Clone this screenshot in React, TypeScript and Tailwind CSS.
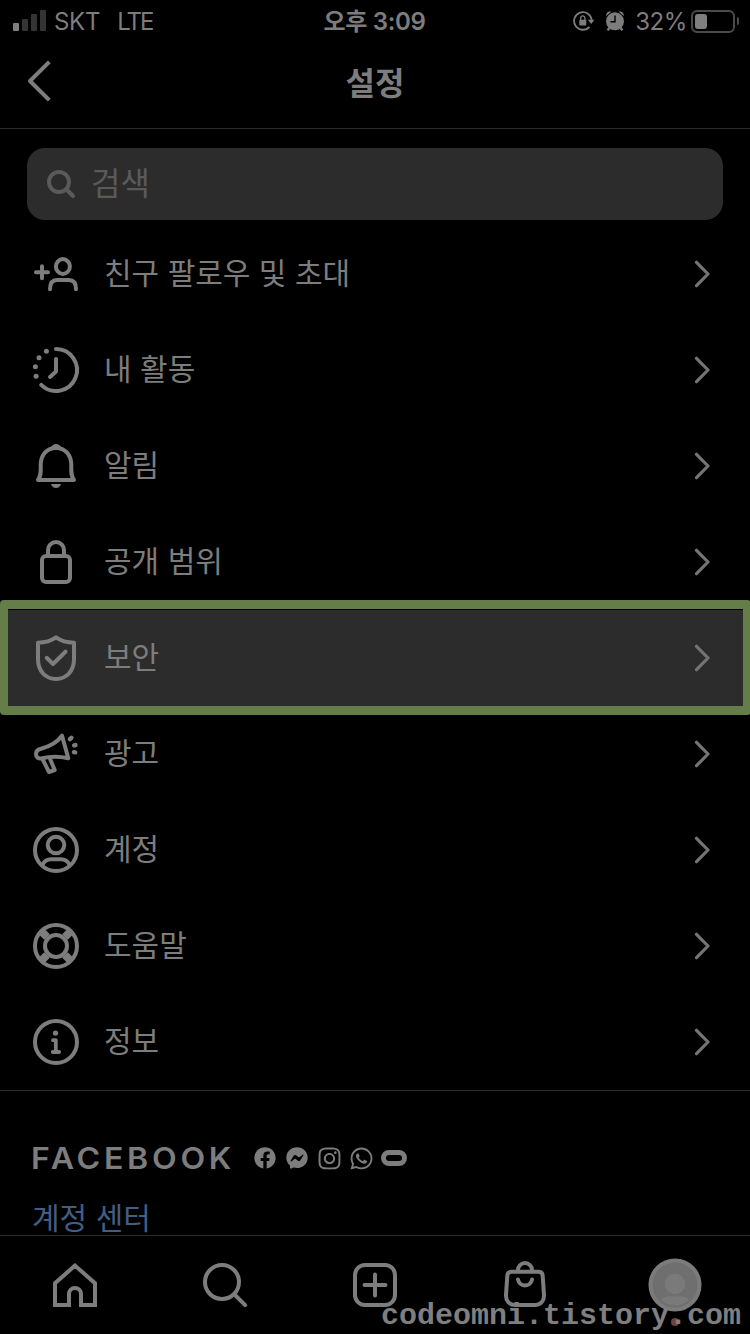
import type { ReactNode } from "react";
import { FaFacebook, FaWhatsapp, FaInstagram } from "react-icons/fa";
import { FaFacebookMessenger } from "react-icons/fa6";

function Icon({ children }: { readonly children: ReactNode }) {
  return (
    <svg
      viewBox="0 0 48 48"
      fill="none"
      stroke="currentColor"
      strokeWidth={4}
      strokeLinecap="round"
      strokeLinejoin="round"
      className="size-12 shrink-0 overflow-visible"
    >
      {children}
    </svg>
  );
}

function InviteIcon() {
  return (
    <Icon>
      <path d="M4 22.2h12M10 16.2v12" />
      <ellipse cx="30.9" cy="16.5" rx="7" ry="7.4" />
      <path d="M18 39.2C18 33 20.5 30 25 30h12c4.500 0 7 3 7 9.200" />
    </Icon>
  );
}

function ActivityIcon() {
  return (
    <Icon>
      <path d="M24 3a21 21 0 1 1-14.800 35.900" />
      <path d="M24 13v12.500l-6 5.500" />
      <g fill="currentColor" stroke="none">
        <circle cx="14.400" cy="5.300" r="2.500" />
        <circle cx="7" cy="11.700" r="2.500" />
        <circle cx="3.400" cy="20.700" r="2.500" />
        <circle cx="4.100" cy="30.300" r="2.500" />
      </g>
    </Icon>
  );
}

function BellIcon() {
  return (
    <Icon>
      <path d="M6 38c3.300-4.500 2.700-8 2.700-15C8.700 12.500 15 6 24 6s15.300 6.500 15.300 17c0 7-.6 10.500 2.700 15Z" />
      <path d="M18 6.500c1.500-3 3.500-4.500 6-4.500s4.500 1.500 6 4.500Z" fill="currentColor" stroke="none" />
      <path d="M19 42h10c-.7 2.500-2.500 4-5 4s-4.300-1.500-5-4Z" fill="currentColor" stroke="none" />
    </Icon>
  );
}

function LockIcon() {
  return (
    <Icon>
      <rect x="10" y="18" width="28" height="26" rx="4" />
      <path d="M16 18v-6a8 8 0 0 1 16 0v6" />
    </Icon>
  );
}

function ShieldIcon() {
  return (
    <Icon>
      <path d="M24 3.300c-5 3.500-11 5.200-18 5.400V25c0 12 7.500 20 18 20s18-8 18-20V8.700c-7-.2-13-1.900-18-5.400Z" />
      <path d="m14.700 23.800 6.300 6.200 12.500-12.300" />
    </Icon>
  );
}

function MegaphoneIcon() {
  return (
    <Icon>
      <path d="M30 5.700 36.300 28.300C26 26 18 26.500 10 28.300c-4 .8-6-1.300-6-4.300 0-3.200 1.500-4.500 5-5.300C17.500 16.500 24.500 13 30 5.700Z" />
      <path d="m10.500 29 6.500 13 5.700-2-5-12" />
      <path d="m37.900 9.200 1.500-1.400M42.100 15.400l1.400-.3M41.900 22.200l1.300.2" strokeWidth="4.400" />
    </Icon>
  );
}

function AccountIcon() {
  return (
    <Icon>
      <circle cx="24" cy="24" r="21" />
      <circle cx="24" cy="19" r="8.300" />
      <path d="M10.500 38.500c2-3.500 4.500-5.200 8.500-5.200h10c4 0 6.500 1.700 8.500 5.200" />
    </Icon>
  );
}

function HelpIcon() {
  return (
    <Icon>
      <circle cx="24" cy="24" r="21" />
      <circle cx="24" cy="24" r="11" />
      <path
        d="m15 15-5-5M33 15l5-5M15 33l-5 5M33 33l5 5"
        strokeWidth="8"
        strokeLinecap="butt"
      />
    </Icon>
  );
}

function InfoIcon() {
  return (
    <Icon>
      <circle cx="24" cy="24" r="21" />
      <circle cx="23.500" cy="15.100" r="2.700" fill="currentColor" stroke="none" />
      <path d="M21 22.200h2.800V34M20.800 34h6.400" strokeWidth="3.800" />
    </Icon>
  );
}

const menuItems = [
  { label: "친구 팔로우 및 초대", icon: <InviteIcon /> },
  { label: "내 활동", icon: <ActivityIcon /> },
  { label: "알림", icon: <BellIcon /> },
  { label: "공개 범위", icon: <LockIcon /> },
  { label: "보안", icon: <ShieldIcon />, highlighted: true },
  { label: "광고", icon: <MegaphoneIcon /> },
  { label: "계정", icon: <AccountIcon /> },
  { label: "도움말", icon: <HelpIcon /> },
  { label: "정보", icon: <InfoIcon /> },
];

function StatusBar() {
  return (
    <div className="grid h-10 shrink-0 grid-cols-3 items-center text-2xl leading-10">
      <div className="flex items-center pl-[13px]">
        <div className="mb-0.5 flex items-end gap-[3px]">
          <span className="h-2 w-1.5 rounded-[1px] bg-[#7f7f7f]" />
          <span className="h-3 w-1.5 rounded-[1px] bg-[#343434]" />
          <span className="h-[17px] w-1.5 rounded-[1px] bg-[#343434]" />
          <span className="h-[21px] w-1.5 rounded-[1px] bg-[#343434]" />
        </div>
        <span className="mt-0.5 ml-2 tracking-[-0.3px]">SKT</span>
        <span className="mt-0.5 ml-[17px] tracking-[-2px]">LTE</span>
      </div>
      <div className="mt-0.5 pr-px text-center font-semibold tracking-[-0.3px] whitespace-nowrap">오후 3:09</div>
      <div className="flex items-center justify-end pr-[11px]">
        <svg viewBox="0 0 22 20" className="h-5 w-[22px] shrink-0" fill="none" stroke="currentColor" strokeWidth="1.800">
          <path d="M18.700 9.500A8.800 8.800 0 1 0 16.500 15.800" />
          <path d="M14.800 8.800h6.700l-3.300 4.200Z" fill="currentColor" stroke="none" />
          <rect x="6.300" y="8.700" width="7" height="5.800" rx=".8" fill="currentColor" stroke="none" />
          <path d="M7.700 9V7a2.100 2.100 0 0 1 4.200 0v2" strokeWidth="1.300" />
        </svg>
        <svg viewBox="0 0 18 20" className="ml-[11px] h-5 w-[18px] shrink-0" fill="currentColor">
          <circle cx="9" cy="10.300" r="9" />
          <path d="M.3 5C-.5 2 2.500-.5 5.300.8L.3 5ZM17.700 5c.8-3-2.200-5.500-5-4.200l5 4.200ZM2.500 16l2 2-2.300 2-1.500-1.500ZM15.500 16l-2 2 2.300 2 1.500-1.500Z" />
          <path d="M9 4.500v6.200H4.500" fill="none" stroke="#000" strokeWidth="1.400" />
        </svg>
        <span className="mt-0.5 ml-[11px] tracking-[-0.4px]">32%</span>
        <div className="ml-1 flex h-[23px] w-11 items-center rounded-md border-2 border-[#4a4a4a] pl-0.5">
          <div className="h-[15px] w-3 rounded-[3px] bg-[#7f7f7f]" />
        </div>
        <div className="ml-0.5 h-2 w-[2px] rounded-r-full bg-[#4a4a4a]" />
      </div>
    </div>
  );
}

function TabBar() {
  return (
    <nav className="relative grid h-[99px] shrink-0 grid-cols-5 place-items-center border-t border-[#2c2c2c] bg-black">
      <Icon>
        <path
          d="M24 4.600 4 22.200V44h14V33a6 6 0 0 1 12 0v11h14V22.200Z"
          strokeLinejoin="miter"
        />
      </Icon>
      <Icon>
        <circle cx="21" cy="21" r="17" />
        <path d="m33.500 33.500 10.700 10.700" />
      </Icon>
      <Icon>
        <rect x="4" y="4" width="40" height="40" rx="10" />
        <path d="M13.500 24h21M24 13.500v21" />
      </Icon>
      <Icon>
        <path d="M10.500 10.800h27c2.500 0 4 1.500 4.200 4L43 34c.3 6-3.500 10-9 10H14c-5.500 0-9.300-4-9-10l1.300-19.200c.2-2.500 1.700-4 4.200-4Z" />
        <path d="M17 10V9a7 7 0 0 1 14 0v1M17 18.500a7.100 7.100 0 0 0 14 0" />
      </Icon>
      <svg viewBox="0 0 54 54" className="size-[54px]">
        <circle cx="27" cy="27" r="24.500" fill="#6f6f6f" stroke="#7b7b7b" strokeWidth="4" />
        <circle cx="27" cy="26" r="10.200" fill="#7a7a7a" />
        <path d="M13 42c2-3 5-3.800 9-3.800h10c4 0 7 .8 9 3.800a21 21 0 0 1-28 0Z" fill="#7a7a7a" />
      </svg>
      <span className="absolute top-[82px] left-[671px] size-2 rounded-full bg-[#6f4040]" />
      <span className="absolute top-[64px] left-[381px] font-['Liberation_Mono',monospace] text-[30px] leading-8 font-bold tracking-[0px] whitespace-nowrap text-[#7f7f7f]">
        codeomni.tistory.com
      </span>
    </nav>
  );
}

export default function App() {
  return (
    <div className="flex h-[1334px] w-[750px] flex-col overflow-hidden bg-black font-[Inter,'Noto_Sans_CJK_KR',sans-serif] text-[#7d7d7d]">
      <StatusBar />

      <header className="grid h-[89px] shrink-0 grid-cols-3 items-center border-b border-[#2c2c2c]">
        <svg
          viewBox="0 0 24 42"
          className="mb-[7px] ml-[27px] h-[42px] w-6"
          fill="none"
          stroke="currentColor"
          strokeWidth="4"
        >
          <path d="M22.300 1.800 3 21l19.300 19.200" strokeLinejoin="round" />
        </svg>
        <h1 className="text-center text-[32px] leading-10 font-bold">설정</h1>
      </header>

      <main className="min-h-0 flex-1 overflow-hidden">
        <div className="mx-[27px] mt-[19px] flex h-[72px] items-center rounded-[18px] bg-[#2c2c2c] pl-5 text-[#5a5a5a]">
          <svg viewBox="0 0 28 28" className="size-7" fill="none" stroke="currentColor" strokeWidth="4" strokeLinecap="round">
            <circle cx="12" cy="12" r="10" />
            <path d="m20 20 6 6" />
          </svg>
          <span className="ml-4 text-[32px] leading-10">검색</span>
        </div>

        <ul className="mt-1.5">
          {menuItems.map((item) => (
            <li
              key={item.label}
              className={
                item.highlighted
                  ? "relative flex h-24 items-center bg-[#2c2c2c] pr-10 pl-8"
                  : "flex h-24 items-center pr-10 pl-8"
              }
            >
              {item.icon}
              <span className="mb-0.5 ml-6 flex-1 text-[30px] leading-10">{item.label}</span>
              <svg
                viewBox="0 0 16 28"
                className="h-7 w-4"
                fill="none"
                stroke="#747474"
                strokeWidth="3.200"
                strokeLinecap="round"
                strokeLinejoin="round"
              >
                <path d="m2.500 2.300 11.500 11.700L2.500 25.700" />
              </svg>
              {item.highlighted && (
                <span className="absolute -top-2.5 -bottom-[9px] left-0 w-[751px] rounded-[4px] border-x-8 border-y-[9px] border-[#657d48]" />
              )}
            </li>
          ))}
        </ul>

        <footer className="border-t border-[#2c2c2c] pt-[47px] pl-8">
          <div className="flex h-10 items-center">
            <span className="-ml-px w-[223px] origin-left scale-x-[1.07] text-[30px] leading-10 font-semibold tracking-[3.500px]">
              FACEBOOK
            </span>
            <div className="flex items-center gap-2.5">
              <FaFacebook className="size-[22px]" />
              <FaFacebookMessenger className="size-[22px]" />
              <FaInstagram className="-mx-[1.500px] size-[25px]" />
              <FaWhatsapp className="-mx-[1.500px] size-[25px]" />
              <span className="-ml-px h-4 w-[26px] rounded-full border-[5px] border-current" />
            </div>
          </div>
          <a className="mt-5 block text-[30px] leading-10 text-[#445d83]">계정 센터</a>
        </footer>
      </main>

      <TabBar />
    </div>
  );
}
